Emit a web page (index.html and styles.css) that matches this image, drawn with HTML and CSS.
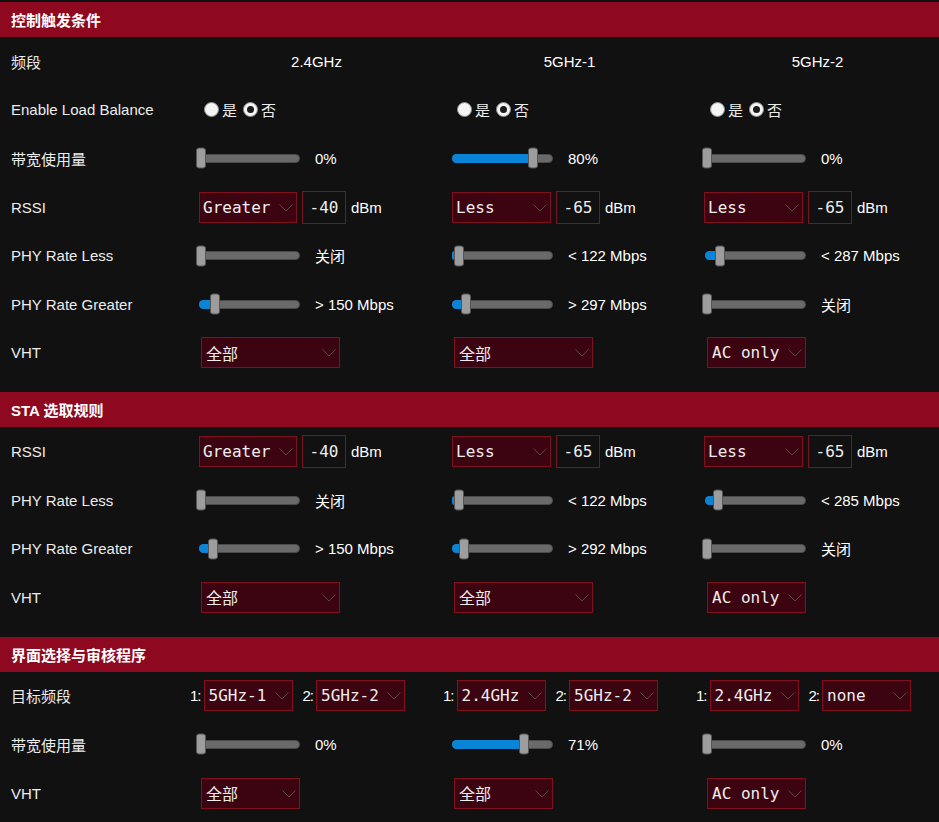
FILE: index.html
```html
<!DOCTYPE html>
<html lang="zh">
<head>
<meta charset="utf-8">
<title>Smart Connect</title>
<link rel="stylesheet" href="styles.css">
</head>
<body>
<section class="sec">
  <div class="sec-head">控制触发条件</div>
  <div class="row">
    <div class="lbl">频段</div>
    <div class="cell center">2.4GHz</div>
    <div class="cell center">5GHz-1</div>
    <div class="cell center">5GHz-2</div>
  </div>
  <div class="row">
    <div class="lbl">Enable Load Balance</div>
    <div class="cell"><span class="radio r1"></span><span class="rt1">是</span><span class="radio on r2"></span><span class="rt2">否</span></div>
    <div class="cell"><span class="radio r1"></span><span class="rt1">是</span><span class="radio on r2"></span><span class="rt2">否</span></div>
    <div class="cell"><span class="radio r1"></span><span class="rt1">是</span><span class="radio on r2"></span><span class="rt2">否</span></div>
  </div>
  <div class="row">
    <div class="lbl">带宽使用量</div>
    <div class="cell"><div class="slider"><div class="fill" style="width:0%"></div><div class="thumb" style="left:0%"></div></div><span class="val">0%</span></div>
    <div class="cell"><div class="slider"><div class="fill" style="width:80%"></div><div class="thumb" style="left:80%"></div></div><span class="val">80%</span></div>
    <div class="cell"><div class="slider"><div class="fill" style="width:0%"></div><div class="thumb" style="left:0%"></div></div><span class="val">0%</span></div>
  </div>
  <div class="row">
    <div class="lbl">RSSI</div>
    <div class="cell"><div class="sel w98">Greater<svg class="chev" width="14" height="8" viewBox="0 0 14 8"><path d="M0.5 0.5 L7 7 L13.5 0.5"/></svg></div><div class="num">-40</div><span class="unit">dBm</span></div>
    <div class="cell"><div class="sel w99">Less<svg class="chev" width="14" height="8" viewBox="0 0 14 8"><path d="M0.5 0.5 L7 7 L13.5 0.5"/></svg></div><div class="num">-65</div><span class="unit">dBm</span></div>
    <div class="cell"><div class="sel w99 s3">Less<svg class="chev" width="14" height="8" viewBox="0 0 14 8"><path d="M0.5 0.5 L7 7 L13.5 0.5"/></svg></div><div class="num">-65</div><span class="unit">dBm</span></div>
  </div>
  <div class="row">
    <div class="lbl">PHY Rate Less</div>
    <div class="cell"><div class="slider"><div class="fill" style="width:0%"></div><div class="thumb" style="left:0%"></div></div><span class="val">关闭</span></div>
    <div class="cell"><div class="slider"><div class="fill" style="width:5%"></div><div class="thumb" style="left:5%"></div></div><span class="val">&lt; 122 Mbps</span></div>
    <div class="cell"><div class="slider"><div class="fill" style="width:13%"></div><div class="thumb" style="left:13%"></div></div><span class="val">&lt; 287 Mbps</span></div>
  </div>
  <div class="row">
    <div class="lbl">PHY Rate Greater</div>
    <div class="cell"><div class="slider"><div class="fill" style="width:14%"></div><div class="thumb" style="left:14%"></div></div><span class="val">&gt; 150 Mbps</span></div>
    <div class="cell"><div class="slider"><div class="fill" style="width:12%"></div><div class="thumb" style="left:12%"></div></div><span class="val">&gt; 297 Mbps</span></div>
    <div class="cell"><div class="slider"><div class="fill" style="width:0%"></div><div class="thumb" style="left:0%"></div></div><span class="val">关闭</span></div>
  </div>
  <div class="row">
    <div class="lbl">VHT</div>
    <div class="cell"><div class="sel vht wide">全部<svg class="chev" width="14" height="8" viewBox="0 0 14 8"><path d="M0.5 0.5 L7 7 L13.5 0.5"/></svg></div></div>
    <div class="cell"><div class="sel vht wide">全部<svg class="chev" width="14" height="8" viewBox="0 0 14 8"><path d="M0.5 0.5 L7 7 L13.5 0.5"/></svg></div></div>
    <div class="cell"><div class="sel vht narrow">AC only<svg class="chev" width="14" height="8" viewBox="0 0 14 8"><path d="M0.5 0.5 L7 7 L13.5 0.5"/></svg></div></div>
  </div>
</section>

<section class="sec">
  <div class="sec-head">STA 选取规则</div>
  <div class="row">
    <div class="lbl">RSSI</div>
    <div class="cell"><div class="sel w98">Greater<svg class="chev" width="14" height="8" viewBox="0 0 14 8"><path d="M0.5 0.5 L7 7 L13.5 0.5"/></svg></div><div class="num">-40</div><span class="unit">dBm</span></div>
    <div class="cell"><div class="sel w99">Less<svg class="chev" width="14" height="8" viewBox="0 0 14 8"><path d="M0.5 0.5 L7 7 L13.5 0.5"/></svg></div><div class="num">-65</div><span class="unit">dBm</span></div>
    <div class="cell"><div class="sel w99 s3">Less<svg class="chev" width="14" height="8" viewBox="0 0 14 8"><path d="M0.5 0.5 L7 7 L13.5 0.5"/></svg></div><div class="num">-65</div><span class="unit">dBm</span></div>
  </div>
  <div class="row">
    <div class="lbl">PHY Rate Less</div>
    <div class="cell"><div class="slider"><div class="fill" style="width:0%"></div><div class="thumb" style="left:0%"></div></div><span class="val">关闭</span></div>
    <div class="cell"><div class="slider"><div class="fill" style="width:5%"></div><div class="thumb" style="left:5%"></div></div><span class="val">&lt; 122 Mbps</span></div>
    <div class="cell"><div class="slider"><div class="fill" style="width:11%"></div><div class="thumb" style="left:11%"></div></div><span class="val">&lt; 285 Mbps</span></div>
  </div>
  <div class="row">
    <div class="lbl">PHY Rate Greater</div>
    <div class="cell"><div class="slider"><div class="fill" style="width:12%"></div><div class="thumb" style="left:12%"></div></div><span class="val">&gt; 150 Mbps</span></div>
    <div class="cell"><div class="slider"><div class="fill" style="width:10%"></div><div class="thumb" style="left:10%"></div></div><span class="val">&gt; 292 Mbps</span></div>
    <div class="cell"><div class="slider"><div class="fill" style="width:0%"></div><div class="thumb" style="left:0%"></div></div><span class="val">关闭</span></div>
  </div>
  <div class="row">
    <div class="lbl">VHT</div>
    <div class="cell"><div class="sel vht wide">全部<svg class="chev" width="14" height="8" viewBox="0 0 14 8"><path d="M0.5 0.5 L7 7 L13.5 0.5"/></svg></div></div>
    <div class="cell"><div class="sel vht wide">全部<svg class="chev" width="14" height="8" viewBox="0 0 14 8"><path d="M0.5 0.5 L7 7 L13.5 0.5"/></svg></div></div>
    <div class="cell"><div class="sel vht narrow">AC only<svg class="chev" width="14" height="8" viewBox="0 0 14 8"><path d="M0.5 0.5 L7 7 L13.5 0.5"/></svg></div></div>
  </div>
</section>

<section class="sec">
  <div class="sec-head">界面选择与审核程序</div>
  <div class="row">
    <div class="lbl">目标频段</div>
    <div class="cell"><span class="idx">1:</span><div class="sel band">5GHz-1<svg class="chev" width="14" height="8" viewBox="0 0 14 8"><path d="M0.5 0.5 L7 7 L13.5 0.5"/></svg></div><span class="idx idx2">2:</span><div class="sel band">5GHz-2<svg class="chev" width="14" height="8" viewBox="0 0 14 8"><path d="M0.5 0.5 L7 7 L13.5 0.5"/></svg></div></div>
    <div class="cell"><span class="idx">1:</span><div class="sel band">2.4GHz<svg class="chev" width="14" height="8" viewBox="0 0 14 8"><path d="M0.5 0.5 L7 7 L13.5 0.5"/></svg></div><span class="idx idx2">2:</span><div class="sel band">5GHz-2<svg class="chev" width="14" height="8" viewBox="0 0 14 8"><path d="M0.5 0.5 L7 7 L13.5 0.5"/></svg></div></div>
    <div class="cell"><span class="idx">1:</span><div class="sel band">2.4GHz<svg class="chev" width="14" height="8" viewBox="0 0 14 8"><path d="M0.5 0.5 L7 7 L13.5 0.5"/></svg></div><span class="idx idx2">2:</span><div class="sel band">none<svg class="chev" width="14" height="8" viewBox="0 0 14 8"><path d="M0.5 0.5 L7 7 L13.5 0.5"/></svg></div></div>
  </div>
  <div class="row">
    <div class="lbl">带宽使用量</div>
    <div class="cell"><div class="slider"><div class="fill" style="width:0%"></div><div class="thumb" style="left:0%"></div></div><span class="val">0%</span></div>
    <div class="cell"><div class="slider"><div class="fill" style="width:71%"></div><div class="thumb" style="left:71%"></div></div><span class="val">71%</span></div>
    <div class="cell"><div class="slider"><div class="fill" style="width:0%"></div><div class="thumb" style="left:0%"></div></div><span class="val">0%</span></div>
  </div>
  <div class="row">
    <div class="lbl">VHT</div>
    <div class="cell"><div class="sel vht narrow">全部<svg class="chev" width="14" height="8" viewBox="0 0 14 8"><path d="M0.5 0.5 L7 7 L13.5 0.5"/></svg></div></div>
    <div class="cell"><div class="sel vht narrow">全部<svg class="chev" width="14" height="8" viewBox="0 0 14 8"><path d="M0.5 0.5 L7 7 L13.5 0.5"/></svg></div></div>
    <div class="cell"><div class="sel vht narrow">AC only<svg class="chev" width="14" height="8" viewBox="0 0 14 8"><path d="M0.5 0.5 L7 7 L13.5 0.5"/></svg></div></div>
  </div>
</section>
</body>
</html>
```

FILE: styles.css
```css
html, body {
  margin: 0;
  background: #111111;
}
body {
  padding-top: 2px;
  overflow: hidden;
  color: #ececec;
  font-family: "Liberation Sans", "Noto Sans CJK SC", sans-serif;
  font-size: 15px;
}
.sec {
  margin-bottom: 15px;
}
.sec-head {
  height: 35px;
  box-sizing: border-box;
  padding-left: 11px;
  display: flex;
  align-items: center;
  background: #8e0820;
  color: #ffffff;
  font-weight: bold;
  font-size: 15px;
}
.row {
  display: grid;
  grid-template-columns: 190px 253px 253px 1fr;
  height: 48.6px;
  align-items: center;
}
.lbl {
  padding-left: 11px;
  white-space: nowrap;
}
.cell {
  display: flex;
  align-items: center;
  white-space: nowrap;
}
.center {
  justify-content: center;
  color: #fff;
}

/* radios */
.radio {
  box-sizing: border-box;
  width: 15px;
  height: 15px;
  border-radius: 50%;
  background: #f4f4f4;
  border: 1px solid #8a8a8a;
  position: relative;
}
.radio.on::after {
  content: "";
  position: absolute;
  left: 3px;
  top: 3px;
  width: 7px;
  height: 7px;
  border-radius: 50%;
  background: #1a1a1a;
}
.r1 { margin-left: 14px; }
.rt1 { margin-left: 3px; }
.r2 { margin-left: 6px; }
.rt2 { margin-left: 3px; }

/* slider */
.slider {
  position: relative;
  box-sizing: border-box;
  margin-left: 9px;
  width: 101px;
  height: 9px;
  border-radius: 5px;
  background: #6a6a6a;
  border: 1px solid #4b4b4b;
}
.fill {
  position: absolute;
  left: -1px;
  top: -1px;
  bottom: -1px;
  border-radius: 5px;
  background: #0a84d6;
}
.thumb {
  position: absolute;
  top: 50%;
  width: 10px;
  height: 21px;
  margin-left: -4px;
  transform: translateY(-50%);
  box-sizing: border-box;
  border-radius: 3px;
  background: #9d9d9d;
  border: 1px solid #555;
}
.val {
  margin-left: 15px;
  color: #fff;
}

/* select */
.sel {
  position: relative;
  box-sizing: border-box;
  height: 31px;
  display: flex;
  align-items: center;
  padding-left: 3px;
  border: 1px solid #80111f;
  background: #3c0410;
  color: #eeeeee;
  font-family: "DejaVu Sans Mono", "Noto Sans CJK SC", monospace;
  font-size: 16px;
}
.chev {
  position: absolute;
  right: 3px;
  top: 11px;
}
.chev path {
  fill: none;
  stroke: #5c4549;
  stroke-width: 1;
}
.w98 { width: 98px; margin-left: 9px; }
.w99 { width: 99px; margin-left: 9px; }
.s3 { margin-left: 8px; }
.num {
  box-sizing: border-box;
  width: 44px;
  height: 33px;
  margin-left: 5px;
  border: 1px solid #80111f;
  display: flex;
  align-items: center;
  justify-content: center;
  color: #eeeeee;
  font-family: "DejaVu Sans Mono", monospace;
  font-size: 16px;
}
.unit {
  margin-left: 5px;
  color: #fff;
}
.vht {
  margin-left: 11px;
  padding-left: 4px;
}
.vht.wide { width: 139px; }
.vht.narrow { width: 99px; }

.idx {
  color: #fff;
  letter-spacing: -1px;
}
.idx2 { margin-left: 10px; }
.band {
  width: 89px;
  margin-left: 3px;
  padding-left: 4px;
}
```
